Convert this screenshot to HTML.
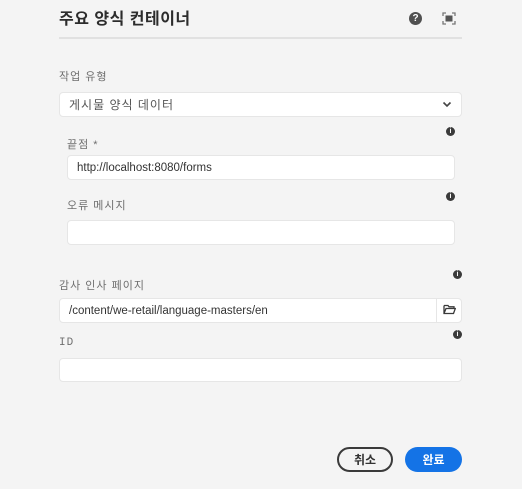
<!DOCTYPE html>
<html><head><meta charset="utf-8"><style>
*{box-sizing:border-box;margin:0;padding:0}
body{width:522px;height:489px;background:#f4f4f4;font-family:"Liberation Sans","Noto Sans CJK KR",sans-serif;position:relative;overflow:hidden;color:#323232}
.a{position:absolute}
.title{left:59px;top:5px;font-size:16px;font-weight:bold;color:#2c2c2c;letter-spacing:0.5px}
.sep{left:59px;top:37px;width:403px;height:2px;background:#e1e1e1}
.lbl{font-size:11px;color:#6e6e6e;letter-spacing:1px}
.in{background:#fff;border:1px solid #e6e6e6;border-radius:4px;font-size:11.5px;color:#333;padding-left:9px;display:flex;align-items:center}
.info{width:9px;height:9px;border-radius:50%;background:#3a3a3a;color:#fff;font-size:7px;font-weight:bold;text-align:center;line-height:9px}
.btn{height:25px;border-radius:13px;font-size:12px;font-weight:bold;display:flex;align-items:center;justify-content:center}
</style></head><body>
<div class="a title">주요 양식 컨테이너</div>
<div class="a" style="left:409px;top:12px;width:13px;height:13px;border-radius:50%;background:#505050;color:#fff;font-size:10px;font-weight:bold;text-align:center;line-height:13px">?</div>
<svg class="a" style="left:442px;top:12px" width="14" height="13" viewBox="0 0 14 13"><path d="M1 4V1H4M10 1H13V4M13 9V12H10M4 12H1V9" fill="none" stroke="#777" stroke-width="1.3"/><rect x="3.5" y="3.5" width="7" height="6" fill="#555"/></svg>
<div class="a sep"></div>
<div class="a lbl" style="left:59px;top:68px">작업 유형</div>
<div class="a in" style="left:59px;top:92px;width:403px;height:25px;color:#555;font-size:12px;letter-spacing:1px">게시물 양식 데이터</div>
<svg class="a" style="left:442px;top:101px" width="10" height="7" viewBox="0 0 10 7"><path d="M1.5 1.5L5 5L8.5 1.5" fill="none" stroke="#444" stroke-width="1.6"/></svg>
<div class="a lbl" style="left:67px;top:136px">끝점 *</div>
<div class="a info" style="left:446px;top:127px">i</div>
<div class="a in" style="left:67px;top:155px;width:388px;height:25px">http://localhost:8080/forms</div>
<div class="a lbl" style="left:67px;top:197px">오류 메시지</div>
<div class="a info" style="left:446px;top:192px">i</div>
<div class="a in" style="left:67px;top:220px;width:388px;height:25px"></div>
<div class="a lbl" style="left:59px;top:277px">감사 인사 페이지</div>
<div class="a info" style="left:453px;top:270px">i</div>
<div class="a in" style="left:59px;top:298px;width:403px;height:25px">/content/we-retail/language-masters/en</div>
<div class="a" style="left:436px;top:299px;width:1px;height:23px;background:#e6e6e6"></div>
<svg class="a" style="left:443px;top:304px" width="13" height="11" viewBox="0 0 13 11"><path d="M1 1.5H5L6 2.8H11V4M1 1.5V9.5H10.5L12.3 4.5H3L1 9.5" fill="none" stroke="#3a3a3a" stroke-width="1.3"/></svg>
<div class="a lbl" style="left:59px;top:337px;font-family:'Liberation Mono',monospace">ID</div>
<div class="a info" style="left:453px;top:330px">i</div>
<div class="a in" style="left:59px;top:358px;width:403px;height:24px"></div>
<div class="a btn" style="left:337px;top:447px;width:56px;border:2px solid #3a3a3a;color:#333">취소</div>
<div class="a btn" style="left:405px;top:447px;width:57px;background:#1473e6;color:#fff">완료</div>
</body></html>
